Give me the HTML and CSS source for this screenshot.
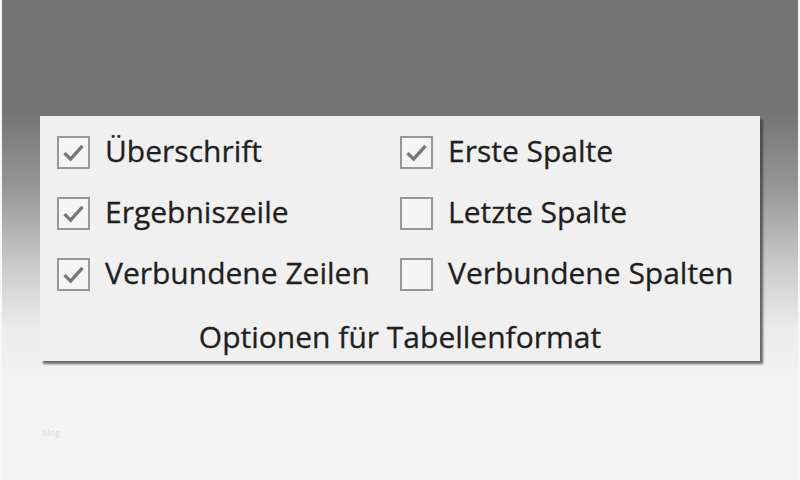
FILE: index.html
```html
<!DOCTYPE html>
<html lang="de">
<head>
<meta charset="utf-8">
<link rel="stylesheet" href="styles.css">
</head>
<body>
<div class="stage">
  <div class="panel">
    <div class="grid">
      <label class="opt"><span class="box checked"><svg viewBox="0 0 20 20"><path d="M3.8 10.4 L8 14.6 L16.2 5.4"/></svg></span><span class="lbl">Überschrift</span></label>
      <label class="opt"><span class="box checked"><svg viewBox="0 0 20 20"><path d="M3.8 10.4 L8 14.6 L16.2 5.4"/></svg></span><span class="lbl">Erste Spalte</span></label>
      <label class="opt"><span class="box checked"><svg viewBox="0 0 20 20"><path d="M3.8 10.4 L8 14.6 L16.2 5.4"/></svg></span><span class="lbl">Ergebniszeile</span></label>
      <label class="opt"><span class="box"></span><span class="lbl">Letzte Spalte</span></label>
      <label class="opt"><span class="box checked"><svg viewBox="0 0 20 20"><path d="M3.8 10.4 L8 14.6 L16.2 5.4"/></svg></span><span class="lbl">Verbundene Zeilen</span></label>
      <label class="opt"><span class="box"></span><span class="lbl">Verbundene Spalten</span></label>
    </div>
    <div class="title">Optionen für Tabellenformat</div>
  </div>
  <div class="mark">blog</div>
</div>
</body>
</html>
```
FILE: styles.css
```css
html, body {
  margin: 0;
  padding: 0;
}
body {
  width: 800px;
  height: 480px;
  overflow: hidden;
  font-family: "Open Sans", "Noto Sans", "Liberation Sans", sans-serif;
}
.stage {
  box-sizing: border-box;
  width: 800px;
  height: 480px;
  padding: 116px 0 0 40px;
  background: linear-gradient(to bottom, #747474 0, #747474 112px, #989898 190px, #cdcdcd 270px, #ececec 330px, #f4f4f4 390px, #f4f4f4 100%);
  border-left: 2px solid #f8f8f8;
  border-right: 2px solid #f8f8f8;
}
.panel {
  box-sizing: border-box;
  width: 720px;
  height: 245px;
  margin-left: -2px;
  background: #f0f0f0;
  box-shadow: 3px 3px 2px rgba(60, 60, 60, 0.75);
  padding: 20px 0 0 17px;
  display: flex;
  flex-direction: column;
}
.grid {
  display: grid;
  grid-template-columns: 343px 1fr;
  grid-auto-rows: 61px;
}
.opt {
  display: flex;
  align-items: flex-start;
  gap: 15px;
}
.box {
  box-sizing: border-box;
  width: 33px;
  height: 33px;
  border: 2px solid #979797;
  background: #f5f5f5;
  display: flex;
  align-items: center;
  justify-content: center;
  flex: none;
}
.box svg {
  width: 29px;
  height: 29px;
}
.box svg path {
  fill: none;
  stroke: #767676;
  stroke-width: 2.3;
}
.lbl {
  font-size: 30px;
  line-height: 36px;
  color: #1f1f1f;
  margin-top: -3px;
  -webkit-text-stroke: 0.3px #1f1f1f;
}
.title {
  margin-left: -17px;
  text-align: center;
  font-size: 30px;
  line-height: 36px;
  color: #1f1f1f;
  margin-top: 0;
  -webkit-text-stroke: 0.3px #1f1f1f;
}
.mark {
  margin: 65px 0 0 0;
  font-size: 9px;
  color: #dcdcdc;
}
```
